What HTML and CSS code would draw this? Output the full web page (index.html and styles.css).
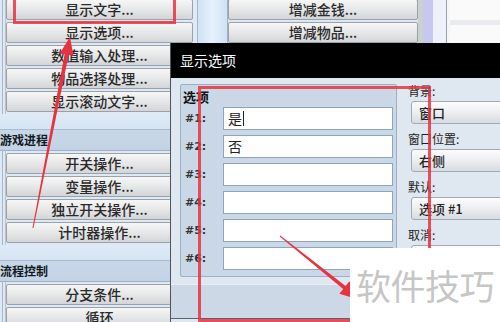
FILE: index.html
```html
<!DOCTYPE html>
<html lang="zh">
<head>
    <meta charset="UTF-8" />
    <title>显示选项</title>
    <link rel="stylesheet" href="styles.css">
</head>
<body>
    <div class="app">
        <div class="list left">
            <div class="btn">显示文字...</div>
            <div class="btn">显示选项...</div>
            <div class="btn">数值输入处理...</div>
            <div class="btn">物品选择处理...</div>
            <div class="btn">显示滚动文字...</div>
            <div class="group-head"><span>游戏进程</span></div>
            <div class="btn">开关操作...</div>
            <div class="btn">变量操作...</div>
            <div class="btn">独立开关操作...</div>
            <div class="btn">计时器操作...</div>
            <div class="group-head"><span>流程控制</span></div>
            <div class="btn">分支条件...</div>
            <div class="btn">循环</div>
        </div>
        <div class="divider"></div>
        <div class="list right">
            <div class="btn">增减金钱...</div>
            <div class="btn">增减物品...</div>
        </div>
        <div class="scroll"></div>
        <div class="blank"></div>
    </div>

    <div class="dialog">
        <div class="dlg-title">显示选项</div>
        <div class="dlg-body">
            <div class="choices">
                <div class="choices-title">选项</div>
                <div class="row"><label>#1:</label><div class="field">是<i class="caret"></i></div></div>
                <div class="row"><label>#2:</label><div class="field">否</div></div>
                <div class="row"><label>#3:</label><div class="field"></div></div>
                <div class="row"><label>#4:</label><div class="field"></div></div>
                <div class="row"><label>#5:</label><div class="field"></div></div>
                <div class="row"><label>#6:</label><div class="field"></div></div>
            </div>
            <div class="side">
                <div class="side-label">背景:</div>
                <div class="select">窗口</div>
                <div class="side-label">窗口位置:</div>
                <div class="select">右侧</div>
                <div class="side-label">默认:</div>
                <div class="select">选项 #1</div>
                <div class="side-label">取消:</div>
                <div class="select">选项 #2</div>
            </div>
        </div>
        <div class="dlg-foot"></div>
    </div>

    <!-- annotations drawn over the screenshot -->
    <div class="mark mark-btn"></div>
    <div class="mark mark-dlg"></div>
    <svg class="arrows" width="500" height="322" viewBox="0 0 500 322">
        <polygon fill="#e8323f" points="32.5,227.9 64.6,54.3 59.7,53.4 70,37 73.5,56 68.6,55.1 33.5,228.1" />
        <polygon fill="#e8323f" points="279.7,236.4 343.2,289.1 339.4,293.7 360,300 349.4,281.3 345.6,286 280.3,235.6" />
    </svg>
    <div class="watermark">软件技巧</div>
</body>
</html>
```

FILE: styles.css
```css
body {
    margin: 0;
    width: 500px;
    height: 322px;
    overflow: hidden;
    position: relative;
    font-family: "Noto Sans CJK SC", "Noto Sans", sans-serif;
    background: #dbe7f3;
    color: #222;
}
.app {
    display: flex;
    height: 322px;
}
.list {
    display: flex;
    flex-direction: column;
    gap: 2px;
    margin-top: -1px;
}
.left {
    width: 197px;
    background:
        linear-gradient(to right, transparent 2px, #a9b6c3 2px, #a9b6c3 3px, transparent 3px, transparent 5px, #b8c3ce 5px, #b8c3ce 6px, transparent 6px),
        #dde9f5;
}
.left .btn {
    margin: 0 4px 0 6px;
}
.right {
    width: 190px;
}
.btn {
    height: 19px;
    flex: none;
    border: 1px solid #9aa1a8;
    border-radius: 2px;
    background: linear-gradient(#f6f6f6, #e6e7e8 50%, #d3d5d8);
    font-size: 14px;
    line-height: 19px;
    text-align: center;
    color: #2a2a2a;
    font-weight: 500;
}
.group-head {
    height: 37px;
    flex: none;
    display: flex;
    flex-direction: column;
    justify-content: flex-end;
    background: linear-gradient(#dfeaf6 0, #d6e4f3 15px, #a9bccf 15px, #a9bccf 16px, #c8d7e8 16px, #c3d3e5);
    border-bottom: 1px solid #9fb0c2;
    box-sizing: border-box;
}
.group-head span {
    height: 21px;
    line-height: 21px;
    font-size: 12px;
    font-weight: 700;
    color: #111a24;
}
.divider {
    width: 31px;
    background: linear-gradient(to right, #aab8c6 0, #aab8c6 1px, #cfe1f5 1px, #e6f1fc 50%, #cfe1f5 calc(100% - 1px), #9fb1c3 calc(100% - 1px));
}
.scroll {
    width: 32px;
    background: linear-gradient(to right, #c9d3cc 0, #c9d3cc 5px, #c6c8ef 5px, #c6c8ef 15px, #eef0fb 15px, #eef0fb 28px, #9aa0aa 28px, #9aa0aa 29px, #f4f5f8 29px);
}
.blank {
    flex: 1;
    background: linear-gradient(#fafafa 0, #fafafa 20px, #e9ebee 20px, #e9ebee 25px, #fafafa 25px);
}

.dialog {
    position: absolute;
    left: 170px;
    top: 43px;
    width: 340px;
    height: 290px;
    background: #dfe7f0;
    border-left: 1px solid #4c545c;
}
.dlg-title {
    height: 35px;
    background: #000;
    color: #fff;
    font-size: 14px;
    line-height: 34px;
    padding-left: 9px;
}
.dlg-body {
    display: flex;
    gap: 11px;
    padding: 6px 0 0 9px;
}
.choices {
    width: 209px;
    padding: 3px 3px 6px 4px;
    background: #c9d7e6;
    border: 1px solid #9cafc3;
    border-radius: 2px;
}
.choices-title {
    height: 18px;
    line-height: 18px;
    font-size: 13px;
    font-weight: 700;
    color: #111;
    margin-bottom: 1px;
    margin-left: -2px;
}
.row {
    display: flex;
    align-items: center;
    height: 23px;
    margin-bottom: 5px;
}
.row:last-child {
    margin-bottom: 0;
}
.row label {
    width: 38px;
    font-family: "DejaVu Sans", sans-serif;
    font-size: 11px;
    font-weight: 700;
    color: #333;
}
.field {
    width: 164px;
    height: 21px;
    padding-left: 4px;
    background: #fff;
    border: 1px solid #8ea4ba;
    font-size: 14px;
    line-height: 21px;
    color: #222;
    display: flex;
    align-items: center;
}
.caret {
    width: 1px;
    height: 15px;
    background: #222;
    margin-left: 1px;
}
.side {
    display: flex;
    flex-direction: column;
    margin-top: -2px;
}
.side-label {
    height: 18px;
    line-height: 18px;
    font-size: 12px;
    color: #1e1e1e;
    margin-bottom: 1px;
}
.select {
    width: 100px;
    height: 21px;
    margin-left: 3px;
    margin-bottom: 6px;
    padding-left: 7px;
    border: 1px solid #a2abb5;
    border-radius: 3px;
    background: linear-gradient(#fcfcfc, #eceef0 50%, #d7dadf);
    font-size: 13px;
    line-height: 21px;
    font-weight: 500;
    color: #222;
}
.dlg-foot {
    margin-top: 7px;
    height: 33px;
    background: #ccd8e5;
    border-top: 1px solid #e9eef4;
    border-bottom: 1px solid #59636e;
}

.mark {
    position: absolute;
    border: 3px solid rgba(232, 50, 63, 0.85);
    box-sizing: border-box;
}
.mark-btn {
    left: 13px;
    top: -4px;
    width: 163px;
    height: 28px;
}
.mark-dlg {
    left: 198px;
    top: 86px;
    width: 233px;
    height: 236px;
}
.arrows {
    position: absolute;
    left: 0;
    top: 0;
}
.watermark {
    position: absolute;
    left: 350px;
    top: 248px;
    width: 150px;
    height: 74px;
    background: #fff;
    color: #c6c6c6;
    font-size: 35px;
    line-height: 74px;
    padding-left: 6px;
    box-sizing: border-box;
    letter-spacing: -0.5px;
}
```
